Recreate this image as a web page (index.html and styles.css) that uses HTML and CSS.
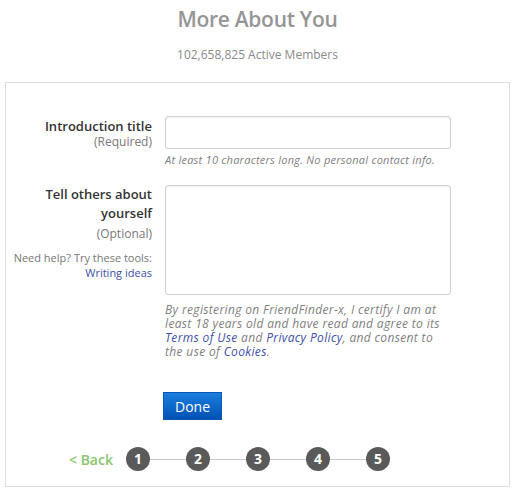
FILE: index.html
```html
<!DOCTYPE html>
<html lang="en">
<head>
    <meta charset="UTF-8">
    <meta name="viewport" content="width=device-width, initial-scale=1.0">
    <title>More About You</title>
    <link rel="stylesheet" href="styles.css">
</head>
<body>
    <div class="page">
        <div class="header">
            <h1>More About You</h1>
            <p class="members">102,658,825 Active Members</p>
        </div>

        <div class="panel">
            <div class="row">
                <div class="label">
                    <label for="intro">Introduction title</label>
                    <span class="note">(Required)</span>
                </div>
                <div class="field">
                    <input type="text" id="intro">
                    <p class="hint">At least 10 characters long. No personal contact info.</p>
                </div>
            </div>

            <div class="row row-about">
                <div class="label">
                    <label for="about">Tell others about yourself</label>
                    <span class="note optional">(Optional)</span>
                    <span class="help">Need help? Try these tools:</span>
                    <a href="#" class="help-link">Writing ideas</a>
                </div>
                <div class="field">
                    <textarea id="about"></textarea>
                    <p class="legal">By registering on FriendFinder-x, I certify I am at least 18 years old and have read and agree to its <a href="#">Terms of Use</a> and <a href="#">Privacy Policy</a>, and consent to the use of <a href="#">Cookies</a>.</p>
                    <button class="done">Done</button>
                </div>
            </div>

            <div class="steps">
                <a href="#" class="back">&lt; Back</a>
                <div class="dots">
                    <span class="dot">1</span>
                    <span class="line"></span>
                    <span class="dot">2</span>
                    <span class="line"></span>
                    <span class="dot">3</span>
                    <span class="line"></span>
                    <span class="dot">4</span>
                    <span class="line"></span>
                    <span class="dot">5</span>
                </div>
            </div>
        </div>
    </div>
</body>
</html>
```

FILE: styles.css
```css
body {
    font-family: "Open Sans", Arial, sans-serif;
    margin: 0;
    padding: 0;
    background-color: #ffffff;
    color: #333;
}
.page {
    width: 505px;
    margin-left: 5px;
}
.header {
    text-align: center;
    padding-top: 5px;
}
h1 {
    margin: 0;
    font-size: 21px;
    line-height: 28px;
    font-weight: 600;
    color: #959595;
    letter-spacing: -0.3px;
}
.members {
    margin: 14px 0 0;
    font-size: 12px;
    line-height: 16px;
    color: #8a8a8a;
}
.panel {
    margin-top: 19px;
    height: 405px;
    box-sizing: border-box;
    border: 1px solid #dcdcdc;
    padding-top: 33px;
}
.row {
    display: flex;
}
.label {
    width: 159px;
    padding-right: 13px;
    box-sizing: border-box;
    text-align: right;
    display: flex;
    flex-direction: column;
    align-items: flex-end;
}
.label label {
    font-size: 13px;
    font-weight: 600;
    line-height: 19px;
    color: #333;
    padding-top: 1px;
}
.note {
    font-size: 12px;
    line-height: 14px;
    color: #777;
    margin-top: -1px;
}
.field {
    width: 286px;
}
input[type="text"], textarea {
    display: block;
    width: 100%;
    box-sizing: border-box;
    border: 1px solid #cfcfcf;
    border-radius: 3px;
    box-shadow: inset 0 1px 2px rgba(0, 0, 0, 0.06);
    font-family: inherit;
    margin: 0;
}
input[type="text"] {
    height: 33px;
}
textarea {
    height: 110px;
    resize: none;
}
.hint {
    margin: 3px 0 0;
    font-size: 11px;
    letter-spacing: 0.25px;
    line-height: 15px;
    font-style: italic;
    color: #808080;
}
.row-about {
    margin-top: 18px;
}
.row-about .label label {
    width: 140px;
    line-height: 19px;
    padding-top: 0;
}
.optional {
    margin-top: 4px;
}
.help {
    margin-top: 9px;
    font-size: 11px;
    line-height: 15px;
    color: #777;
}
.help-link {
    font-size: 11px;
    line-height: 15px;
    color: #3d4fa8;
    text-decoration: none;
}
.legal {
    margin: 8px 0 0;
    width: 280px;
    font-size: 12px;
    letter-spacing: 0.35px;
    line-height: 14px;
    font-style: italic;
    color: #808080;
}
.legal a {
    color: #3d4fa8;
    text-decoration: none;
}
.done {
    margin-top: 33px;
    margin-left: -2px;
    width: 59px;
    height: 28px;
    padding: 0;
    border: 1px solid #0a56b0;
    background: linear-gradient(#1b7ee0, #0052b4);
    color: #ffffff;
    font-family: inherit;
    font-size: 14px;
    cursor: pointer;
}
.steps {
    display: flex;
    align-items: center;
    margin-top: 27px;
    padding-left: 63px;
}
.back {
    color: #8bc66d;
    font-size: 14px;
    font-weight: 600;
    text-decoration: none;
    width: 57px;
}
.dots {
    display: flex;
    align-items: center;
}
.dot {
    width: 24px;
    height: 24px;
    border-radius: 50%;
    background-color: #5a5a5a;
    color: #ffffff;
    font-size: 14px;
    font-weight: 700;
    line-height: 24px;
    text-align: center;
}
.line {
    width: 36px;
    height: 1px;
    background-color: #c8c8c8;
}
```
